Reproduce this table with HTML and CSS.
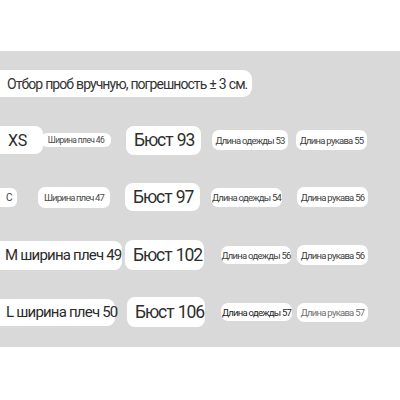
FILE: index.html
```html
<!DOCTYPE html>
<html lang="ru">
<head>
<meta charset="utf-8">
<link rel="stylesheet" href="styles.css">
</head>
<body>
<div class="panel">
  <div class="pill title">Отбор проб вручную, погрешность ± 3 см.</div>

  <div class="row r1">
    <span class="pill big size-xs">XS</span>
    <span class="pill small sh46">Ширина плеч 46</span>
    <span class="pill bust b93">Бюст 93</span>
    <span class="pill small dl53">Длина одежды 53</span>
    <span class="pill small rk">Длина рукава 55</span>
  </div>

  <div class="row r2">
    <span class="pill small size-s">С</span>
    <span class="pill small sh47">Ширина плеч 47</span>
    <span class="pill bust b97">Бюст 97</span>
    <span class="pill small dl54">Длина одежды 54</span>
    <span class="pill small rk">Длина рукава 56</span>
  </div>

  <div class="row r3">
    <span class="pill big size-m">M ширина плеч 49</span>
    <span class="pill bust b102">Бюст 102</span>
    <span class="pill small dl56">Длина одежды 56</span>
    <span class="pill small rk">Длина рукава 56</span>
  </div>

  <div class="row r4">
    <span class="pill big size-l">L ширина плеч 50</span>
    <span class="pill bust b106">Бюст 106</span>
    <span class="pill small dl57">Длина одежды 57</span>
    <span class="pill small rk light">Длина рукава 57</span>
  </div>
</div>
</body>
</html>
```

FILE: styles.css
```css
html, body {
  margin: 0;
  padding: 0;
  background: #ffffff;
}

body {
  font-family: Roboto, "Noto Sans", Arial, sans-serif;
  color: #2b2b2b;
  width: 400px;
  height: 400px;
  overflow: hidden;
}

.panel {
  margin-top: 51px;
  height: 296px;
  background: #d9d9d9;
  box-sizing: border-box;
  padding-top: 19px;
  display: flex;
  flex-direction: column;
}

.pill {
  background: #ffffff;
  box-sizing: border-box;
  display: flex;
  align-items: center;
  white-space: nowrap;
  flex: none;
}

.title {
  width: 252px;
  height: 27px;
  padding-left: 7px;
  border-radius: 0 9px 9px 0;
  font-size: 14px;
  letter-spacing: -0.95px;
  word-spacing: 0.5px;
  color: #333;
}

.row {
  height: 32px;
  margin-top: 25px;
  display: flex;
  align-items: center;
}

.r1 { margin-top: 27px; }
.r3 { margin-top: 26px; }

.big {
  font-size: 15px;
  letter-spacing: -0.8px;
  height: 29px;
  border-radius: 0 8px 8px 0;
  padding-left: 6px;
  color: #2b2b2b;
}

.bust {
  font-size: 17.5px;
  letter-spacing: -1.1px;
  word-spacing: 1px;
  height: 29px;
  border-radius: 8px;
  padding-left: 8px;
  color: #2e2e2e;
}

.small {
  font-size: 9.5px;
  letter-spacing: -0.75px;
  height: 20px;
  border-radius: 7px;
  justify-content: center;
  color: #3d3d3d;
}

.light { color: #707070; }

/* row 1 */
.size-xs { width: 43px; font-size: 16px; letter-spacing: -0.3px; padding-left: 8px; height: 28px; }
.sh46 { width: 70px; height: 14px; margin-left: -2px; font-size: 8.5px; letter-spacing: -0.6px; border-radius: 6px; color: #4a4a4a; }
.b93 { width: 75px; margin-left: 15px; }
.dl53 { width: 76px; margin-left: 11px; }
.rk { width: 71px; }
.r1 .rk { margin-left: 8px; }

/* row 2 */
.size-s { width: 17px; height: 19px; border-radius: 0 6px 6px 0; justify-content: flex-start; padding-left: 6px; font-size: 10px; letter-spacing: 0; }
.sh47 { width: 72px; height: 21px; margin-left: 21px; color: #4a4a4a; letter-spacing: -0.9px; }
.b97 { width: 75px; height: 28px; margin-left: 15px; }
.dl54 { width: 71px; height: 19px; margin-left: 11px; }
.r2 .rk { margin-left: 15px; }

/* row 3 */
.size-m { width: 122px; padding-left: 5px; }
.b102 { width: 79px; margin-left: 3px; height: 30px; }
.dl56 { width: 70px; height: 18px; margin-left: 17px; }
.r3 .rk { margin-left: 6px; }

/* row 4 */
.size-l { width: 115px; height: 27px; padding-left: 6px; }
.b106 { width: 78px; margin-left: 12px; height: 30px; }
.dl57 { width: 71px; height: 18px; margin-left: 16px; color: #222; }
.r4 .rk { margin-left: 5px; height: 19px; }
```
